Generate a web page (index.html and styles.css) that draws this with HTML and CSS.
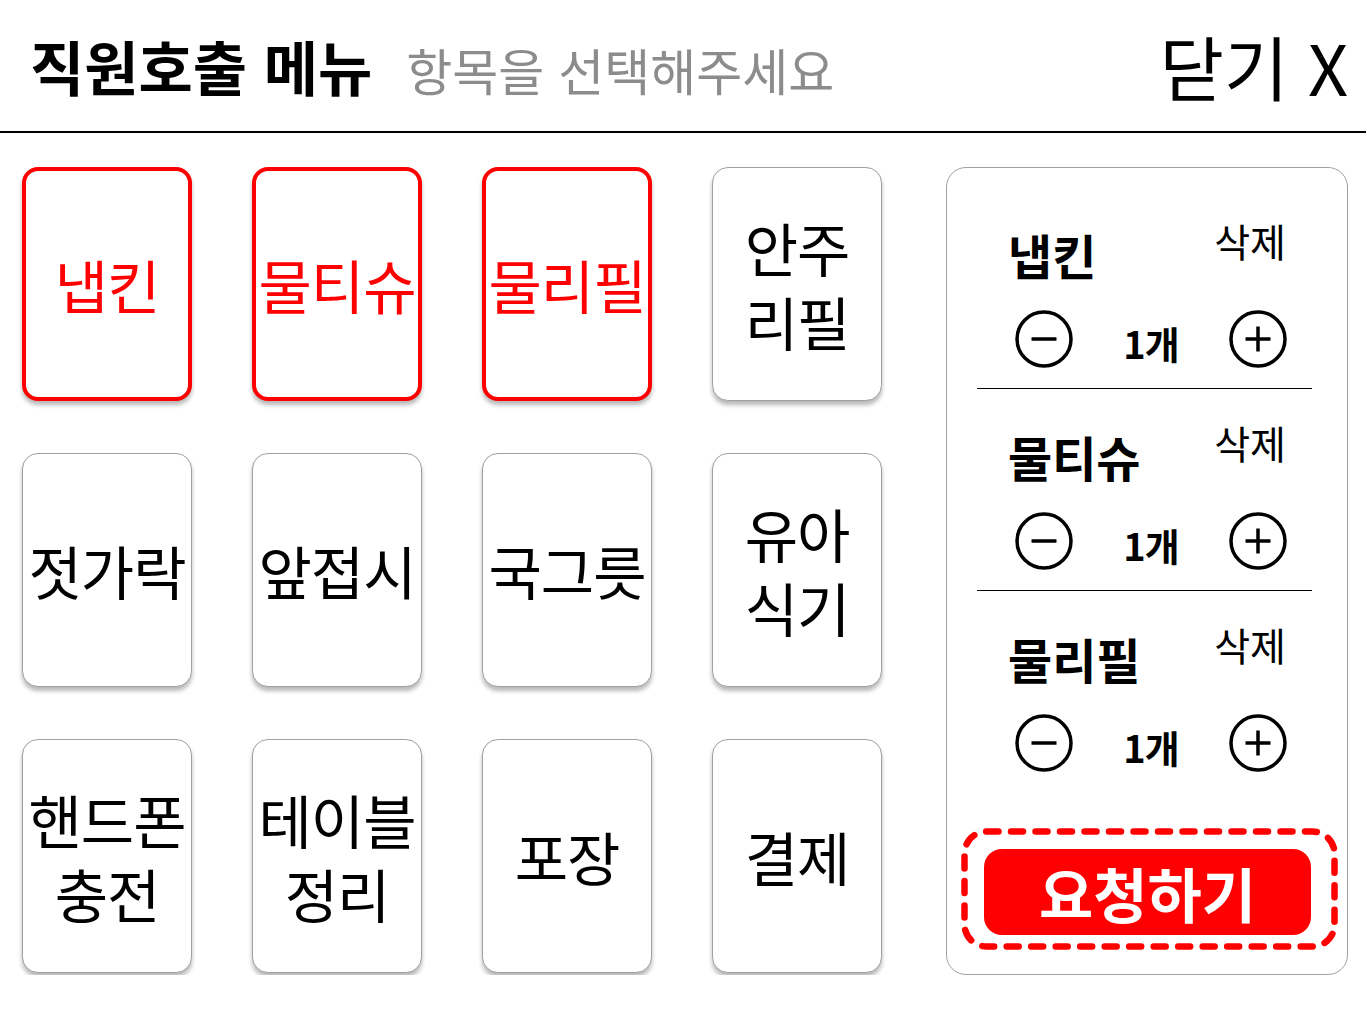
FILE: index.html
```html
<!DOCTYPE html>
<html lang="ko">
<head>
<meta charset="utf-8">
<title>직원호출 메뉴</title>
<link rel="stylesheet" href="styles.css">
</head>
<body>
<header class="topbar">
  <div class="title-group">
    <h1 class="title">직원호출 메뉴</h1>
    <span class="subtitle">항목을 선택해주세요</span>
  </div>
  <button class="close">닫기 X</button>
</header>
<main class="content">
  <section class="menu-grid">
    <button class="menu-item selected">냅킨</button>
    <button class="menu-item selected">물티슈</button>
    <button class="menu-item selected">물리필</button>
    <button class="menu-item">안주<br>리필</button>
    <button class="menu-item">젓가락</button>
    <button class="menu-item">앞접시</button>
    <button class="menu-item">국그릇</button>
    <button class="menu-item">유아<br>식기</button>
    <button class="menu-item">핸드폰<br>충전</button>
    <button class="menu-item">테이블<br>정리</button>
    <button class="menu-item">포장</button>
    <button class="menu-item">결제</button>
  </section>
  <aside class="cart">
    <div class="cart-item">
      <div class="cart-head"><span class="cart-name">냅킨</span><span class="cart-delete">삭제</span></div>
      <div class="counter">
        <svg class="round-btn" viewBox="0 0 58 58"><circle cx="29" cy="29" r="27" /><line x1="16.5" y1="29" x2="41.5" y2="29" /></svg>
        <span class="qty">1개</span>
        <svg class="round-btn" viewBox="0 0 58 58"><circle cx="29" cy="29" r="27" /><line x1="16.5" y1="29" x2="41.5" y2="29" /><line x1="29" y1="16.5" x2="29" y2="41.5" /></svg>
      </div>
    </div>
    <div class="cart-item">
      <div class="cart-head"><span class="cart-name">물티슈</span><span class="cart-delete">삭제</span></div>
      <div class="counter">
        <svg class="round-btn" viewBox="0 0 58 58"><circle cx="29" cy="29" r="27" /><line x1="16.5" y1="29" x2="41.5" y2="29" /></svg>
        <span class="qty">1개</span>
        <svg class="round-btn" viewBox="0 0 58 58"><circle cx="29" cy="29" r="27" /><line x1="16.5" y1="29" x2="41.5" y2="29" /><line x1="29" y1="16.5" x2="29" y2="41.5" /></svg>
      </div>
    </div>
    <div class="cart-item last">
      <div class="cart-head"><span class="cart-name">물리필</span><span class="cart-delete">삭제</span></div>
      <div class="counter">
        <svg class="round-btn" viewBox="0 0 58 58"><circle cx="29" cy="29" r="27" /><line x1="16.5" y1="29" x2="41.5" y2="29" /></svg>
        <span class="qty">1개</span>
        <svg class="round-btn" viewBox="0 0 58 58"><circle cx="29" cy="29" r="27" /><line x1="16.5" y1="29" x2="41.5" y2="29" /><line x1="29" y1="16.5" x2="29" y2="41.5" /></svg>
      </div>
    </div>
    <div class="request-wrap">
      <svg class="dash-ring" viewBox="0 0 377 122" preserveAspectRatio="none"><rect x="3.5" y="3.5" width="370" height="115" rx="22" ry="22" /></svg>
      <button class="request">요청하기</button>
    </div>
  </aside>
</main>
</body>
</html>
```

FILE: styles.css
```css
* { box-sizing: border-box; }

body {
  margin: 0;
  background: #ffffff;
  font-family: "Noto Sans CJK KR", "Noto Sans", sans-serif;
  color: #000;
}

.topbar {
  height: 133px;
  border-bottom: 2px solid #000;
  display: flex;
  align-items: center;
  justify-content: space-between;
  padding: 0 18px 0 30px;
}

.title-group {
  display: flex;
  align-items: baseline;
}

.title {
  margin: 0;
  font-size: 59px;
  font-weight: 700;
  line-height: 1;
}

.subtitle {
  margin-left: 34px;
  font-size: 50px;
  color: #8c8c8c;
  line-height: 1;
}

.close {
  background: none;
  border: none;
  padding: 0;
  font-family: inherit;
  font-size: 70px;
  line-height: 1;
  color: #000;
}

.content {
  display: flex;
  padding: 34px 18px 0 22px;
  gap: 64px;
}

.menu-grid {
  display: grid;
  grid-template-columns: repeat(4, 170px);
  grid-auto-rows: 234px;
  column-gap: 60px;
  row-gap: 52px;
}

.menu-item {
  display: flex;
  align-items: center;
  justify-content: center;
  padding: 0;
  background: #fff;
  border: 1px solid #a0a0a0;
  border-radius: 16px;
  box-shadow: 0 4px 4px rgba(0, 0, 0, 0.28);
  font-family: inherit;
  font-size: 58px;
  line-height: 74px;
  color: #000;
  white-space: nowrap;
  text-align: center;
  letter-spacing: -1px;
}

.menu-item.selected {
  border: 4px solid #ff0000;
  color: #ff0000;
}

.cart {
  width: 402px;
  height: 808px;
  border: 1px solid #a0a0a0;
  border-radius: 20px;
  padding: 53px 9px 24px 14px;
  display: flex;
  flex-direction: column;
}

.cart-item {
  margin: 0 26px 0 16px;
  padding-bottom: 20px;
  border-bottom: 1px solid #000;
  margin-bottom: 34px;
}

.cart-item.last {
  border-bottom: none;
  margin-bottom: 0;
}

.cart-head {
  display: flex;
  justify-content: space-between;
  align-items: flex-start;
  padding: 0 26px 0 31px;
}

.cart-name {
  margin-top: 9px;
  font-size: 48px;
  font-weight: 700;
  line-height: 1;
}

.cart-delete {
  font-size: 39px;
  line-height: 1;
}

.counter {
  margin: 32px 0 0 38px;
  width: 272px;
  height: 58px;
  display: flex;
  align-items: center;
  justify-content: space-between;
}

.round-btn {
  width: 58px;
  height: 58px;
  fill: none;
  stroke: #000;
  stroke-width: 3.5;
}

.qty {
  font-size: 38px;
  font-weight: 700;
  line-height: 1;
  letter-spacing: -1px;
  margin-top: 8px;
}

.request-wrap {
  position: relative;
  margin-top: auto;
  height: 122px;
  padding: 21px 27px 15px 23px;
  display: flex;
}

.dash-ring {
  position: absolute;
  inset: 0;
  width: 100%;
  height: 100%;
  fill: none;
  stroke: #ff0000;
  stroke-width: 6.5;
  stroke-linecap: round;
  stroke-dasharray: 12 12.5;
}

.request {
  flex: 1;
  border: none;
  border-radius: 18px;
  background: #ff0000;
  color: #fff;
  font-family: inherit;
  font-size: 59px;
  font-weight: 700;
  line-height: 1;
  padding: 0;
}
```
